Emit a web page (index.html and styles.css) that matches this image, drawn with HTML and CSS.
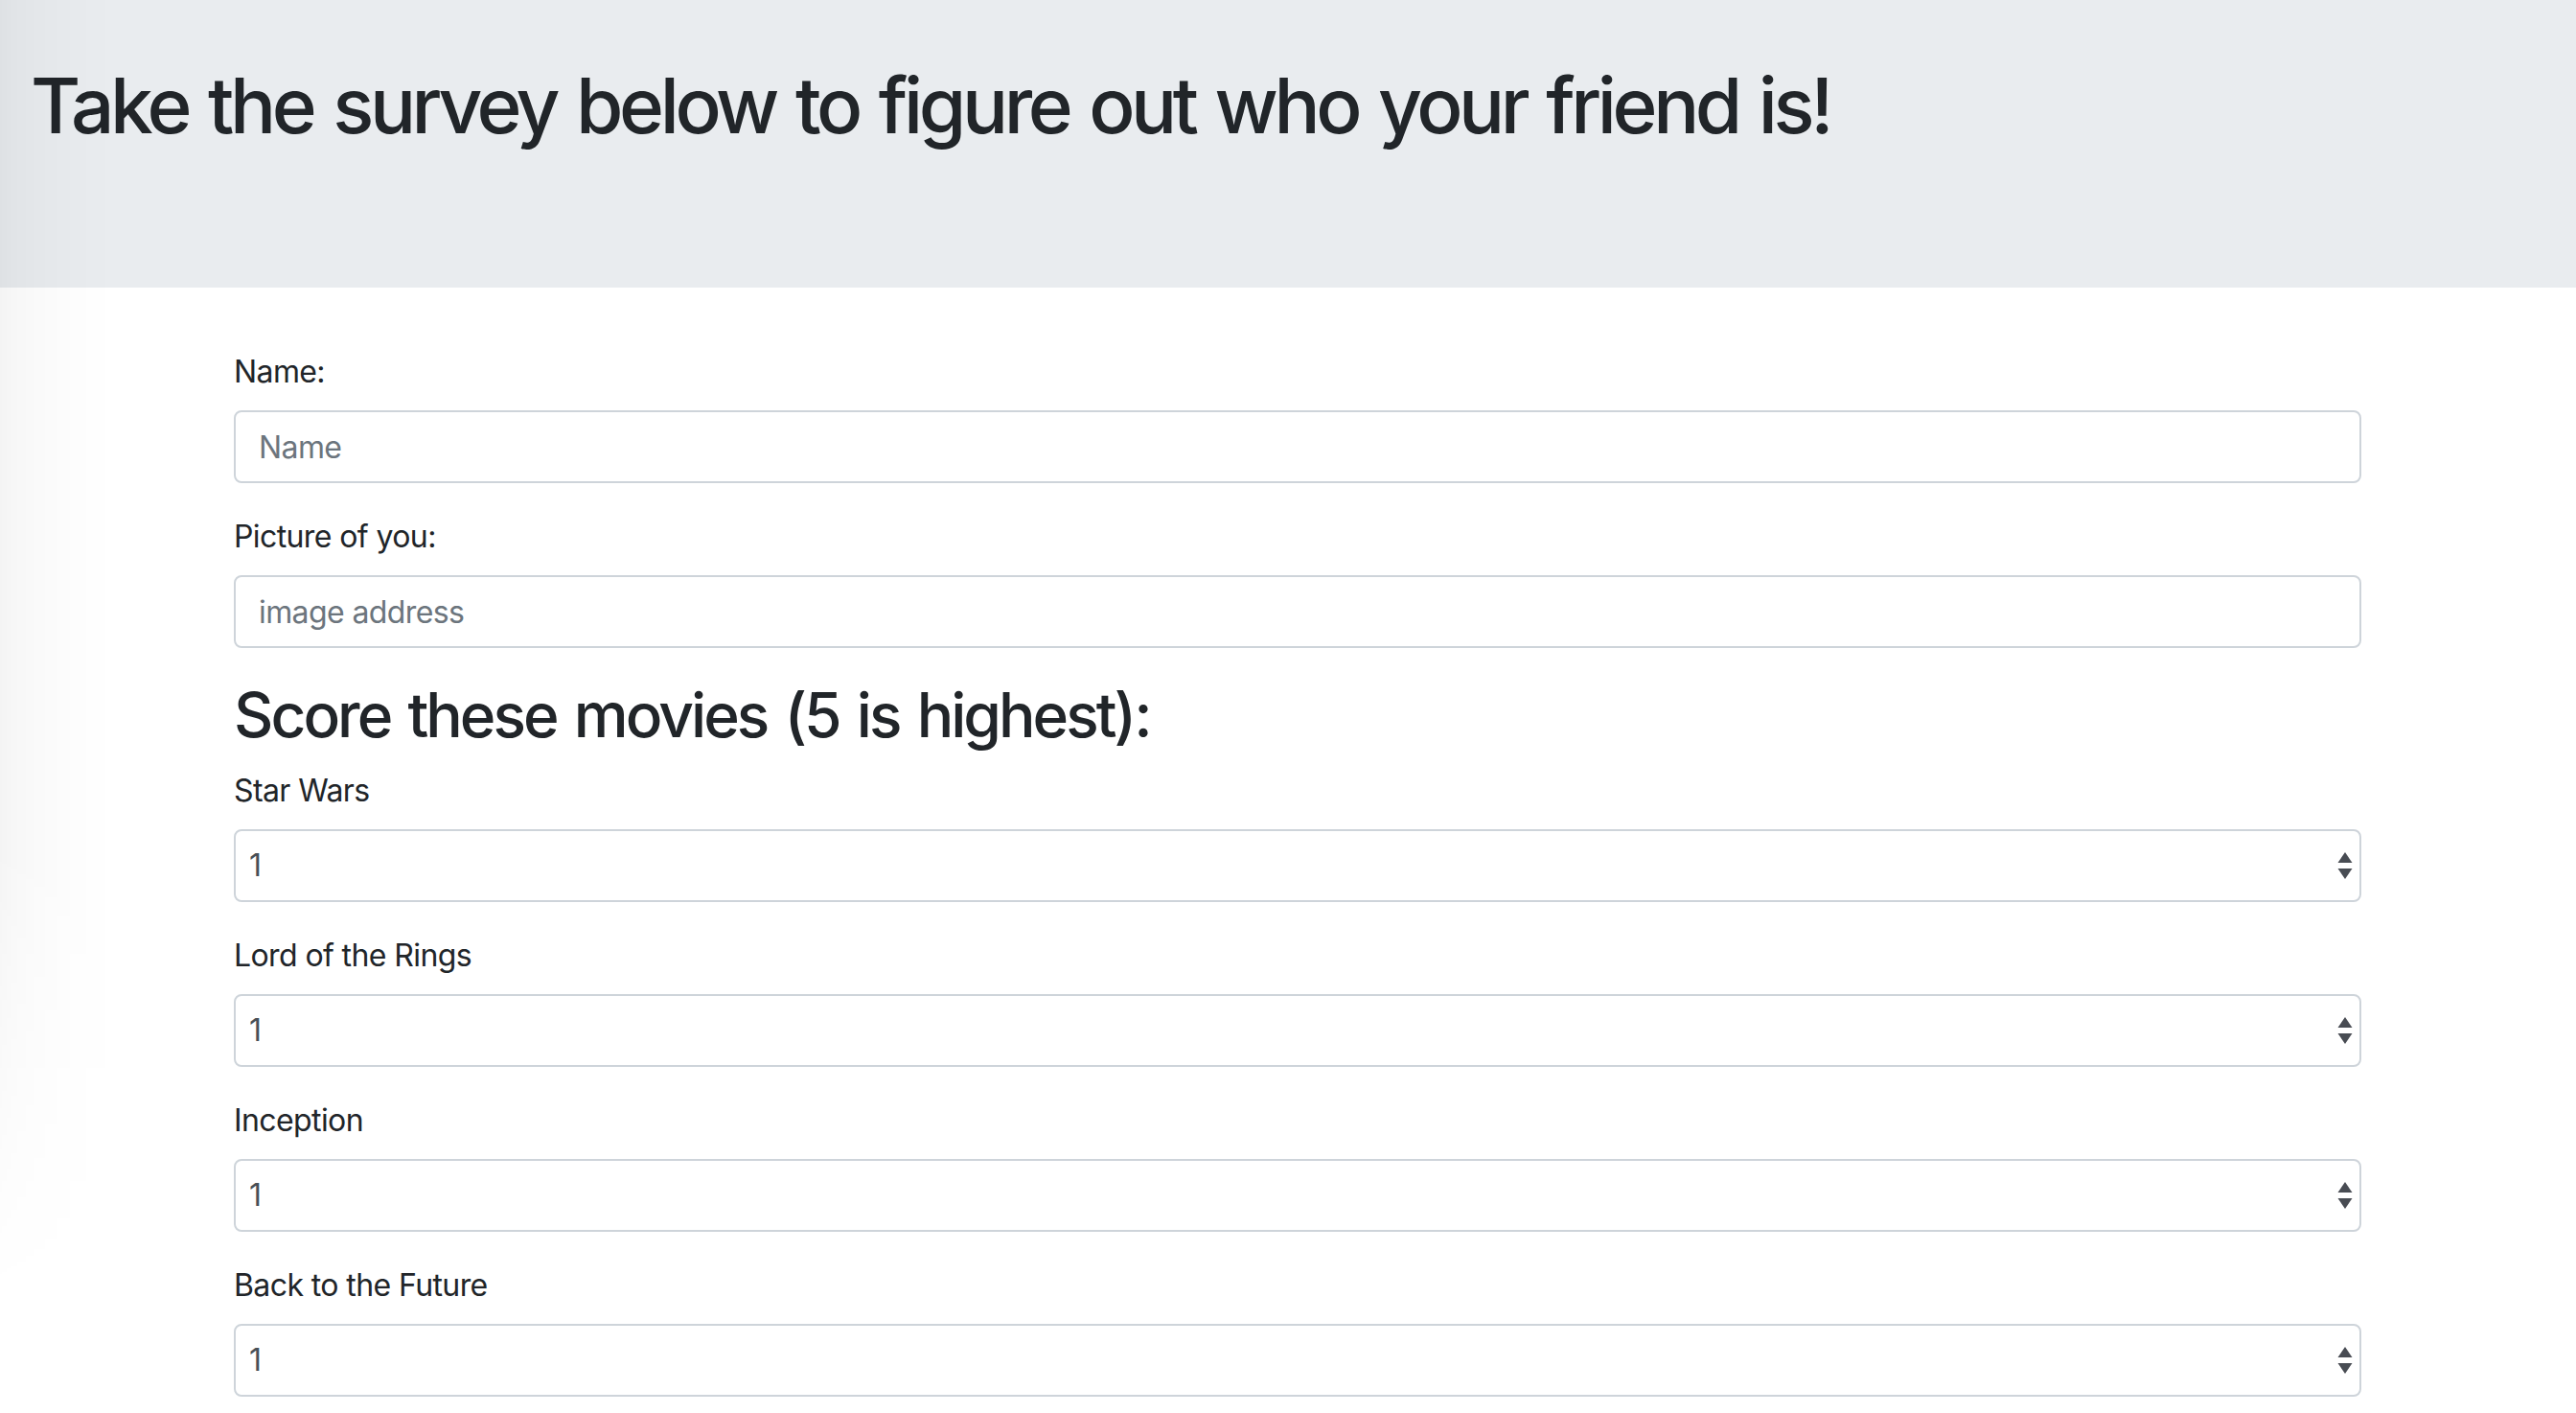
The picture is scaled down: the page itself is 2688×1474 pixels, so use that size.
FILE: index.html
```html
<!DOCTYPE html>
<html lang="en">
<head>
<meta charset="utf-8">
<title>Friend Finder Survey</title>
<link rel="stylesheet" href="styles.css">
</head>
<body>
<div class="edge-shade"></div>
<header class="jumbotron">
  <h1 class="title">Take the survey below to figure out who your friend is!</h1>
</header>
<main class="container">
  <form class="survey">
    <div class="form-group">
      <label class="label" for="name">Name:</label>
      <input class="form-control" id="name" type="text" placeholder="Name">
    </div>
    <div class="form-group">
      <label class="label" for="photo">Picture of you:</label>
      <input class="form-control" id="photo" type="text" placeholder="image address">
    </div>
    <h2 class="section-title">Score these movies (5 is highest):</h2>
    <div class="form-group">
      <label class="label" for="q1">Star Wars</label>
      <div class="select-wrap">
        <select class="form-control select" id="q1"><option>1</option><option>2</option><option>3</option><option>4</option><option>5</option></select>
        <svg class="arrows" width="16" height="30" viewBox="0 0 16 30"><path d="M8 0 L15.5 11 L0.5 11 Z"/><path d="M0.5 17 L15.5 17 L8 28 Z"/></svg>
      </div>
    </div>
    <div class="form-group">
      <label class="label" for="q2">Lord of the Rings</label>
      <div class="select-wrap">
        <select class="form-control select" id="q2"><option>1</option><option>2</option><option>3</option><option>4</option><option>5</option></select>
        <svg class="arrows" width="16" height="30" viewBox="0 0 16 30"><path d="M8 0 L15.5 11 L0.5 11 Z"/><path d="M0.5 17 L15.5 17 L8 28 Z"/></svg>
      </div>
    </div>
    <div class="form-group">
      <label class="label" for="q3">Inception</label>
      <div class="select-wrap">
        <select class="form-control select" id="q3"><option>1</option><option>2</option><option>3</option><option>4</option><option>5</option></select>
        <svg class="arrows" width="16" height="30" viewBox="0 0 16 30"><path d="M8 0 L15.5 11 L0.5 11 Z"/><path d="M0.5 17 L15.5 17 L8 28 Z"/></svg>
      </div>
    </div>
    <div class="form-group">
      <label class="label" for="q4">Back to the Future</label>
      <div class="select-wrap">
        <select class="form-control select" id="q4"><option>1</option><option>2</option><option>3</option><option>4</option><option>5</option></select>
        <svg class="arrows" width="16" height="30" viewBox="0 0 16 30"><path d="M8 0 L15.5 11 L0.5 11 Z"/><path d="M0.5 17 L15.5 17 L8 28 Z"/></svg>
      </div>
    </div>
  </form>
</main>
</body>
</html>
```

FILE: styles.css
```css
html, body {
  margin: 0;
  padding: 0;
  background: #ffffff;
}

body {
  font-family: Inter, "Noto Sans", "Liberation Sans", sans-serif;
  color: #212529;
  font-size: 32px;
  line-height: 1.5;
  position: relative;
  min-height: 1474px;
  overflow: hidden;
}

.edge-shade {
  position: absolute;
  left: 0;
  top: 0;
  width: 120px;
  height: 1350px;
  pointer-events: none;
  background: linear-gradient(to right, rgba(0,0,0,0.045) 0, rgba(0,0,0,0.03) 14px, rgba(0,0,0,0.018) 40px, rgba(0,0,0,0.006) 80px, rgba(0,0,0,0) 120px);
  -webkit-mask-image: linear-gradient(to bottom, #000 0, #000 65%, transparent 100%);
  mask-image: linear-gradient(to bottom, #000 0, #000 65%, transparent 100%);
  z-index: 5;
}

.jumbotron {
  background: #e9ecef;
  height: 300px;
  box-sizing: border-box;
  padding: 62px 32px 0 32px;
  margin-bottom: 64px;
}

.title {
  margin: 0;
  font-size: 80px;
  font-weight: 500;
  line-height: 1.2;
  letter-spacing: -4.4px;
  word-spacing: 4px;
  color: #212529;
}

.container {
  padding: 0 224px 0 244px;
}

.survey {
  display: flex;
  flex-direction: column;
}

.form-group {
  display: flex;
  flex-direction: column;
  margin-bottom: 32px;
}

.label {
  display: block;
  margin-bottom: 16px;
  font-size: 32px;
  line-height: 48px;
  letter-spacing: -0.6px;
  color: #212529;
}

.form-control {
  display: block;
  width: 100%;
  height: 76px;
  box-sizing: border-box;
  padding: 0 24px;
  border: 2px solid #ced4da;
  border-radius: 8px;
  background: #fff;
  font-family: inherit;
  font-size: 32px;
  letter-spacing: -0.6px;
  color: #495057;
  outline: none;
  margin: 0;
}

.form-control::placeholder {
  color: #6c757d;
  opacity: 1;
}

.section-title {
  margin: 0 0 16px 0;
  font-size: 64px;
  font-weight: 500;
  line-height: 1.2;
  letter-spacing: -2.95px;
  word-spacing: 4px;
  color: #212529;
}

.select-wrap {
  position: relative;
}

.select {
  -webkit-appearance: none;
  appearance: none;
  padding-left: 14px;
  padding-right: 48px;
  color: #495057;
}

.arrows {
  position: absolute;
  right: 9px;
  top: 24px;
  fill: #484c53;
  pointer-events: none;
}
```
